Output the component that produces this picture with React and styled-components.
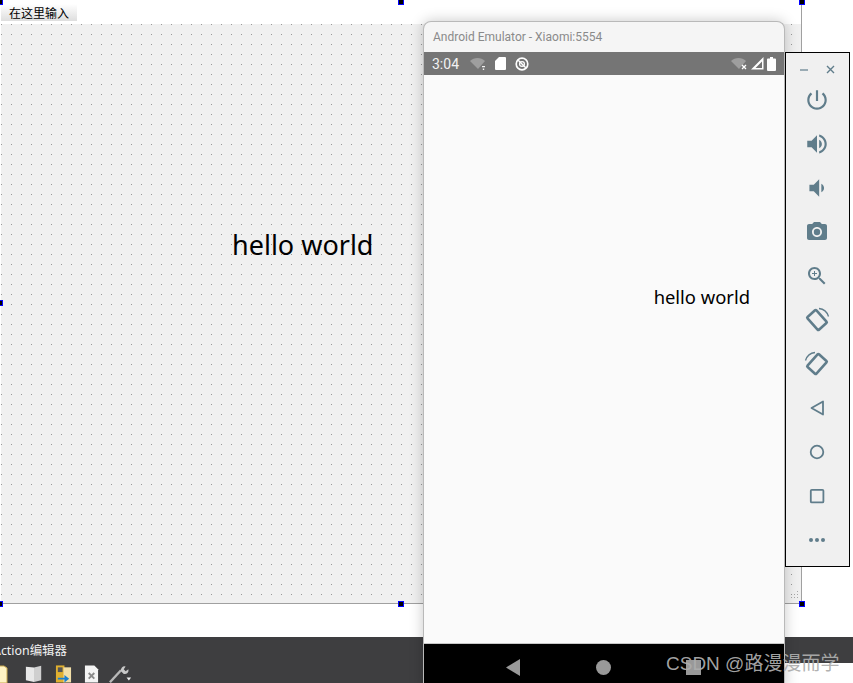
import React from 'react'
import styled, { createGlobalStyle } from 'styled-components'

const GlobalStyle = createGlobalStyle`
  html, body {
    margin: 0;
    padding: 0;
    background: #ffffff;
    overflow: hidden;
  }
`

const UI_FONT = `"Noto Sans", "Noto Sans CJK SC", sans-serif`

const Page = styled.div`
  position: relative;
  width: 853px;
  height: 683px;
  overflow: hidden;
  background: #ffffff;
  font-family: ${UI_FONT};
`

// designer side ---------------------------------

const Designer = styled.div`
  width: 802px;
  padding-left: 1px;
  box-sizing: border-box;
  border-right: 1px solid #a0a0a0;
`

const MenuStrip = styled.div`
  height: 24px;
  padding-top: 4px;
  box-sizing: border-box;
`

const MenuItem = styled.div`
  width: 76px;
  height: 17px;
  padding-left: 8px;
  box-sizing: border-box;
  font-size: 12px;
  line-height: 19px;
  color: #000000;
  background: linear-gradient(#ffffff, #dedede);
`

const FormCanvas = styled.div`
  position: relative;
  height: 580px;
  box-sizing: border-box;
  border-bottom: 1px solid #a0a0a0;
  background-color: #f0f0f0;
  background-image: radial-gradient(circle at 0.5px 0.5px, #999999 0.7px, transparent 0.7px);
  background-size: 10px 10px;
  display: flex;
  justify-content: flex-start;
`

const FormLabel = styled.div`
  margin: 202px 0 0 231px;
  font-size: 27px;
  line-height: 38px;
  color: #000000;
  white-space: nowrap;
`

const Grip = styled.svg`
  position: absolute;
  right: 1px;
  bottom: 1px;
`

const Handle = styled.i`
  position: absolute;
  left: ${p => p.$x}px;
  top: ${p => p.$y}px;
  width: 4px;
  height: 4px;
  background: #000000;
  border: 1px solid #0000ff;
`

const BottomPanel = styled.div`
  margin-top: 33px;
  width: 853px;
`

const PanelHeader = styled.div`
  height: 26px;
  background: #3e3e40;
  color: #f1f1f1;
  font-size: 12.4px;
  line-height: 27px;
  white-space: nowrap;
  overflow: hidden;
`

const PanelTitle = styled.span`
  display: inline-block;
  margin-left: -7px;
`

const ToolRow = styled.div`
  width: 640px;
  height: 20px;
  background: #3e3e40;
  display: flex;
  gap: 10px;
  overflow: hidden;
`

const ToolIcon = styled.svg`
  flex: none;
  margin-left: ${p => p.$ml || 0}px;
`

// emulator window -------------------------------

const EmulatorWindow = styled.div`
  position: absolute;
  left: 423px;
  top: 21px;
  width: 362px;
  height: 670px;
  box-sizing: border-box;
  border: 1px solid #b9b9b9;
  border-bottom: 0;
  border-radius: 8px 8px 0 0;
  background: #f5f5f5;
  box-shadow: 0 0 14px rgba(0, 0, 0, 0.22);
  display: flex;
  flex-direction: column;
`

const TitleBar = styled.div`
  height: 30px;
  padding-left: 9px;
  font-family: Roboto, sans-serif;
  font-size: 12px;
  line-height: 30px;
  color: #8a8a8a;
  white-space: nowrap;
`

const StatusBar = styled.div`
  height: 23px;
  padding: 0 8px;
  background: #757575;
  display: flex;
  align-items: center;
  color: #f2f2f2;
  font-family: Roboto, sans-serif;
  font-size: 14px;
`

const StatusTime = styled.span`
  margin-right: 10px;
  width: 28px;
`

const StatusGroup = styled.div`
  display: flex;
  align-items: center;
  gap: ${p => p.$gap}px;
  margin-left: ${p => (p.$right ? 'auto' : '0')};
`

const PhoneScreen = styled.div`
  flex: none;
  height: 569px;
  background: #fafafa;
  border-bottom: 1px solid #c8c8c8;
  box-sizing: border-box;
  display: flex;
  justify-content: flex-end;
`

const PhoneLabel = styled.div`
  margin: 208px 34px 0 0;
  font-size: 18.4px;
  line-height: 28px;
  color: #000000;
  white-space: nowrap;
`

const NavBar = styled.div`
  flex: 1;
  background: #000000;
  display: flex;
  align-items: flex-start;
  padding: 15px 0 0 81px;
  gap: 75px;
`

// side toolbar ----------------------------------

const SidePanel = styled.div`
  position: absolute;
  left: 785px;
  top: 52px;
  width: 65px;
  height: 515px;
  box-sizing: border-box;
  border: 1px solid #000000;
  background: #f0f0f0;
  display: flex;
  flex-direction: column;
  align-items: center;
`

const WindowControls = styled.div`
  width: 100%;
  height: 25px;
  padding: 8px 14px 0 14px;
  box-sizing: border-box;
  display: flex;
  justify-content: space-between;
  align-items: center;
`

const SideButton = styled.div`
  width: 100%;
  height: 44px;
  flex: none;
  padding-right: 2px;
  box-sizing: border-box;
  display: flex;
  align-items: center;
  justify-content: center;
`

const Watermark = styled.div`
  position: absolute;
  left: 666px;
  top: 651px;
  font-size: 19px;
  line-height: 26px;
  color: rgba(172, 172, 172, 0.95);
  font-family: "Liberation Sans", "Noto Sans CJK SC", sans-serif;
  white-space: nowrap;
`

const ICON = '#607d8b'

const Mat = ({ size = 24, children }) => (
  <svg width={size} height={size} viewBox="0 0 24 24" fill={ICON}>{children}</svg>
)

const sideIcons = [
  <Mat size={26}><path d="M13 3h-2v10h2V3zm4.83 2.17l-1.42 1.42C17.99 7.86 19 9.81 19 12c0 3.87-3.13 7-7 7s-7-3.13-7-7c0-2.19 1.01-4.14 2.58-5.42L6.17 5.17C4.23 6.82 3 9.26 3 12c0 4.97 4.03 9 9 9s9-4.03 9-9c0-2.74-1.23-5.18-3.17-6.83z" /></Mat>,
  <Mat size={26}><path d="M3 9v6h4l5 5V4L7 9H3zm13.5 3c0-1.77-1.02-3.29-2.5-4.03v8.05c1.48-.73 2.5-2.25 2.5-4.02zM14 3.23v2.06c2.89.86 5 3.54 5 6.71s-2.11 5.85-5 6.71v2.06c4.01-.91 7-4.49 7-8.77s-2.99-7.86-7-8.77z" /></Mat>,
  <Mat size={26}><path d="M18.5 12c0-1.77-1.02-3.29-2.5-4.03v8.05c1.48-.73 2.5-2.25 2.5-4.02zM5 9v6h4l5 5V4L9 9H5z" /></Mat>,
  <Mat><path fillRule="evenodd" d="M9 2 7.17 4H4c-1.1 0-2 .9-2 2v12c0 1.1.9 2 2 2h16c1.1 0 2-.9 2-2V6c0-1.1-.9-2-2-2h-3.17L15 2H9zm3 15c-2.76 0-5-2.24-5-5s2.24-5 5-5 5 2.24 5 5-2.24 5-5 5z" /><circle cx="12" cy="12" r="3.2" /></Mat>,
  <Mat><path d="M15.5 14h-.79l-.28-.27C15.41 12.59 16 11.11 16 9.5 16 5.91 13.09 3 9.5 3S3 5.91 3 9.5 5.91 16 9.5 16c1.61 0 3.09-.59 4.23-1.57l.27.28v.79l5 4.99L20.49 19l-4.99-5zm-6 0C7.01 14 5 11.99 5 9.5S7.01 5 9.5 5 14 7.01 14 9.5 11.99 14 9.5 14z" /><path d="M12 10h-2v2H9v-2H7V9h2V7h1v2h2v1z" /></Mat>,
  <svg width="26" height="26" viewBox="0 0 26 26" fill="none" stroke={ICON}>
    <rect x="4.5" y="7" width="17" height="12" rx="1" strokeWidth="2.6" transform="rotate(48 13 13)" />
    <path d="M15 1.500c4.500.4 8.200 3.800 9.500 8" strokeWidth="1.300" />
  </svg>,
  <svg width="26" height="26" viewBox="0 0 26 26" fill="none" stroke={ICON}>
    <rect x="4.5" y="7" width="17" height="12" rx="1" strokeWidth="2.6" transform="rotate(-48 13 13)" />
    <path d="M11 1.500c-4.500.4-8.200 3.800-9.500 8" strokeWidth="1.300" />
  </svg>,
  <svg width="24" height="24" viewBox="0 0 24 24" fill="none" stroke={ICON} strokeWidth="1.800"><path d="M18 5.500v13L6.500 12z" strokeLinejoin="round" /></svg>,
  <svg width="24" height="24" viewBox="0 0 24 24" fill="none" stroke={ICON} strokeWidth="1.800"><circle cx="12" cy="12" r="6.300" /></svg>,
  <svg width="24" height="24" viewBox="0 0 24 24" fill="none" stroke={ICON} strokeWidth="1.800"><rect x="5.800" y="5.800" width="12.600" height="12.600" rx="1" /></svg>,
  <svg width="24" height="24" viewBox="0 0 24 24" fill={ICON}><circle cx="6" cy="12" r="2" /><circle cx="12" cy="12" r="2" /><circle cx="18" cy="12" r="2" /></svg>,
]

const handles = [
  [-3, -1], [398, -1], [799, -1],
  [-3, 300], [799, 300],
  [-3, 601], [398, 601], [799, 601],
]

const App = () => (
  <Page>
    <GlobalStyle />

    <Designer>
      <MenuStrip>
        <MenuItem>在这里输入</MenuItem>
      </MenuStrip>
      <FormCanvas>
        <FormLabel>hello world</FormLabel>
        <Grip width="12" height="12" viewBox="0 0 12 12" fill="#a8a8a8">
          <rect x="9" y="1" width="1" height="1" />
          <rect x="6" y="4" width="1" height="1" /><rect x="9" y="4" width="1" height="1" />
          <rect x="3" y="7" width="1" height="1" /><rect x="6" y="7" width="1" height="1" /><rect x="9" y="7" width="1" height="1" />
        </Grip>
      </FormCanvas>
    </Designer>

    {handles.map(([x, y]) => <Handle key={`${x}-${y}`} $x={x} $y={y} />)}

    <BottomPanel>
      <PanelHeader><PanelTitle>Action编辑器</PanelTitle></PanelHeader>
      <ToolRow>
        <ToolIcon $ml={-6} width="16" height="20" viewBox="0 0 16 20">
          <path d="M1 3h9l3 2v15H1z" fill="#fff3c4" stroke="#c9a84e" />
        </ToolIcon>
        <ToolIcon $ml={5} width="18" height="20" viewBox="0 0 20 20">
          <path d="M1 3l9 1v16l-9-2z" fill="#e8e8e8" />
          <path d="M10 4l8-2v16l-8 2z" fill="#cfcfcf" />
        </ToolIcon>
        <ToolIcon $ml={2} width="17" height="20" viewBox="0 0 18 20">
          <rect x="1" y="2" width="9" height="18" fill="#e0b030" />
          <rect x="9" y="4" width="8" height="16" fill="#f2dfa8" />
          <rect x="3" y="4" width="5" height="5" fill="#555" />
          <path d="M3 15h7v-3l5 4-5 4v-3H3z" fill="#1a7fd0" />
        </ToolIcon>
        <ToolIcon $ml={2} width="15" height="20" viewBox="0 0 16 20">
          <path d="M1 2h10l4 4v14H1z" fill="#f4f4f4" />
          <path d="M5 10l6 6M11 10l-6 6" stroke="#8a8a8a" strokeWidth="2" />
        </ToolIcon>
        <ToolIcon width="24" height="20" viewBox="0 0 26 20">
          <path d="M1 20L13 7" stroke="#b8b8b8" strokeWidth="2.600" />
          <path d="M13 8a4 4 0 0 1 5-5l-2 3 2 2 3-2a4 4 0 0 1-5 5z" fill="#c8c8c8" />
          <path d="M19 15h5l-2.500 3z" fill="#f0f0f0" />
        </ToolIcon>
      </ToolRow>
    </BottomPanel>

    <EmulatorWindow>
      <TitleBar>Android Emulator - Xiaomi:5554</TitleBar>
      <StatusBar>
        <StatusTime>3:04</StatusTime>
        <StatusGroup $gap={9}>
          <svg width="16" height="12" viewBox="0 0 16 12">
            <path d="M0 3c4-4 11-4 15 0L8 11z" fill="#9e9e9e" />
            <path d="M12 8h3v1.200h-3zM12.800 10.500h1.400V12h-1.400z" fill="#f2f2f2" />
          </svg>
          <svg width="11" height="13" viewBox="0 0 11 13"><path d="M4 0h6a1 1 0 0 1 1 1v11a1 1 0 0 1-1 1H1a1 1 0 0 1-1-1V4z" fill="#ffffff" /></svg>
          <svg width="14" height="14" viewBox="0 0 15 15" fill="none" stroke="#ffffff">
            <circle cx="7.500" cy="7.500" r="6.200" strokeWidth="1.800" />
            <circle cx="7.500" cy="7.500" r="2.600" strokeWidth="1.300" />
            <path d="M3.500 3.500l8 8" strokeWidth="1.500" />
          </svg>
        </StatusGroup>
        <StatusGroup $right $gap={3}>
          <svg width="17" height="13" viewBox="0 0 17 13">
            <path d="M0 4c4-4 11-4 15 0L8 12z" fill="#9e9e9e" />
            <path d="M11 8l4 4M15 8l-4 4" stroke="#ffffff" strokeWidth="1.300" />
          </svg>
          <svg width="13" height="13" viewBox="0 0 13 13"><path d="M0 12.500L12.500 0v12.500zM4.500 11H11V4.500z" fill="#ffffff" fillRule="evenodd" /></svg>
          <svg width="9" height="14" viewBox="0 0 9 14"><path d="M3 0h3v1.500h2a1 1 0 0 1 1 1V13a1 1 0 0 1-1 1H1a1 1 0 0 1-1-1V2.500a1 1 0 0 1 1-1h2z" fill="#ffffff" /></svg>
        </StatusGroup>
      </StatusBar>
      <PhoneScreen>
        <PhoneLabel>hello world</PhoneLabel>
      </PhoneScreen>
      <NavBar>
        <svg width="16" height="17" viewBox="0 0 16 17"><path d="M15 0v17L1 8.500z" fill="#999999" /></svg>
        <svg width="15" height="17" viewBox="0 0 15 17"><circle cx="7.500" cy="8.500" r="7.500" fill="#999999" /></svg>
        <svg width="15" height="17" viewBox="0 0 15 17"><rect x="0" y="1" width="15" height="15" fill="#999999" /></svg>
      </NavBar>
    </EmulatorWindow>

    <SidePanel>
      <WindowControls>
        <svg width="8" height="8" viewBox="0 0 8 8"><path d="M0 4h8" stroke={ICON} strokeWidth="1.200" /></svg>
        <svg width="9" height="9" viewBox="0 0 9 9"><path d="M1 1l7 7M8 1L1 8" stroke={ICON} strokeWidth="1.400" /></svg>
      </WindowControls>
      {sideIcons.map((icon, i) => <SideButton key={i}>{icon}</SideButton>)}
    </SidePanel>

    <Watermark>CSDN @路漫漫而学</Watermark>
  </Page>
)

export default App
